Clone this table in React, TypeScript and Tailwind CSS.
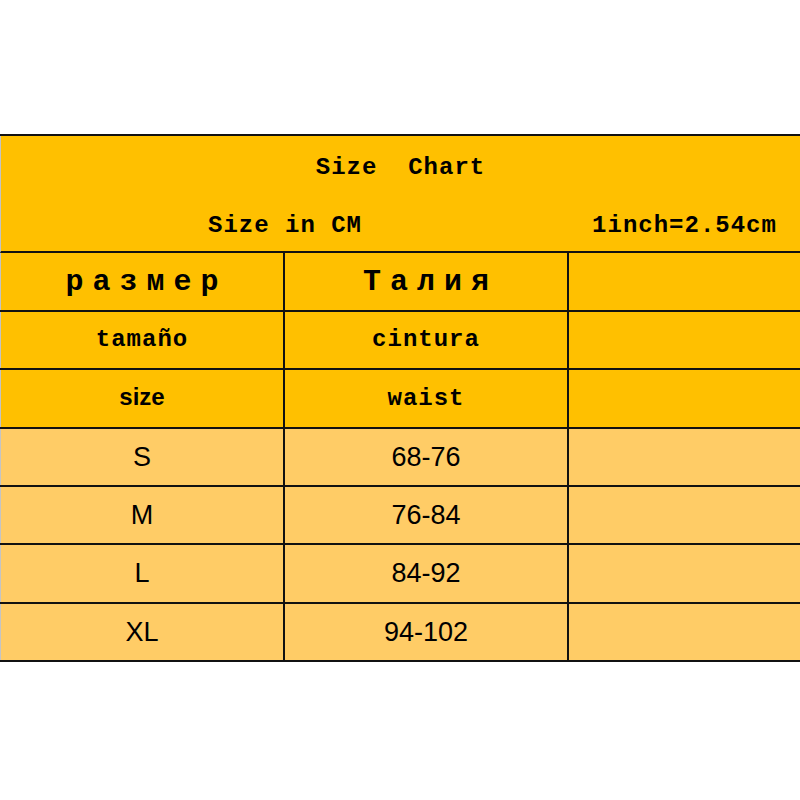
const mono = "font-['Liberation_Mono',_'DejaVu_Sans_Mono',monospace] font-bold";
const sans = "font-['Liberation_Sans',Arial,sans-serif]";

const headRows = [
  { a: "размер", b: "Талия", h: "h-[57px]", kind: "ru" },
  { a: "tamaño", b: "cintura", h: "h-[56px]", kind: "es" },
  { a: "size", b: "waist", h: "h-[57px]", kind: "en" },
];

const dataRows = [
  { size: "S", waist: "68-76", h: "h-[56px]" },
  { size: "M", waist: "76-84", h: "h-[56px]" },
  { size: "L", waist: "84-92", h: "h-[57px]" },
  { size: "XL", waist: "94-102", h: "h-[56px]" },
];

function Row({ h, bg, a, b }: { h: string; bg: string; a: React.ReactNode; b: React.ReactNode }) {
  return (
    <div className={`grid grid-cols-[285px_284px_1fr] border-b-2 border-[#111] ${bg}`}>
      <div className={`${h} flex items-center justify-center border-r-2 border-[#111] border-l border-l-[#c4c4c4]`}>{a}</div>
      <div className={`${h} flex items-center justify-center border-r-2 border-[#111]`}>{b}</div>
      <div className={h}></div>
    </div>
  );
}

export default function App() {
  return (
    <div className="w-[800px] h-[800px] bg-white pt-[134px] text-black">
      <div className="border-t-2 border-[#111]">
        {/* title block */}
        <div className="bg-[#FFC000] border-b-2 border-[#111] border-l border-l-[#c4c4c4]">
          <div className={`h-[58px] flex items-center justify-center pt-[5px] ${mono} text-[24px] tracking-[1px] whitespace-pre`}>
            Size  Chart
          </div>
          <div className="h-[57px] grid grid-cols-[568px_1fr] pt-[6px]">
            <div className={`flex items-center justify-center ${mono} text-[24px] tracking-[1px] whitespace-pre`}>Size in CM</div>
            <div className={`flex items-center justify-center ${mono} text-[24px] tracking-[1px]`}>1inch=2.54cm</div>
          </div>
        </div>

        {headRows.map((r) => (
          <Row
            key={r.a}
            h={r.h}
            bg="bg-[#FFC000]"
            a={
              r.kind === "ru" ? (
                <span className={`${mono} text-[30px] tracking-[9px] pl-[9px] leading-none`}>{r.a}</span>
              ) : r.kind === "en" ? (
                <span className={`${sans} font-bold text-[24px] -mt-[4px]`}>{r.a}</span>
              ) : (
                <span className={`${mono} text-[24px] tracking-[1px]`}>{r.a}</span>
              )
            }
            b={
              r.kind === "ru" ? (
                <span className={`${mono} text-[30px] tracking-[9px] pl-[9px] leading-none`}>{r.b}</span>
              ) : (
                <span className={`${mono} text-[24px] tracking-[1px]`}>{r.b}</span>
              )
            }
          />
        ))}

        {dataRows.map((r) => (
          <Row
            key={r.size}
            h={r.h}
            bg="bg-[#FFCC66]"
            a={<span className={`${sans} text-[27px]`}>{r.size}</span>}
            b={<span className={`${sans} text-[27px]`}>{r.waist}</span>}
          />
        ))}
      </div>
    </div>
  );
}
